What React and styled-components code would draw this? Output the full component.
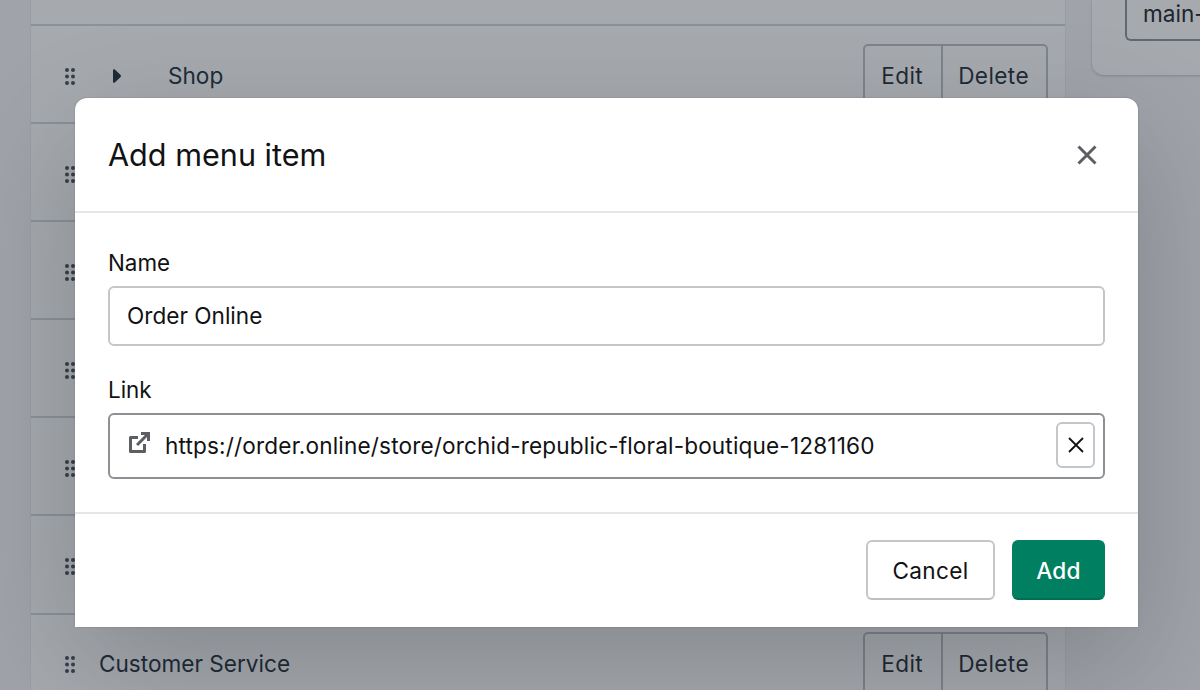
import React from "react";
import styled, { createGlobalStyle } from "styled-components";

const Global = createGlobalStyle`
  html, body { margin: 0; padding: 0; height: 100%; overflow: hidden; background: #f6f6f7; }
  body { font-family: Inter, "Liberation Sans", sans-serif; color: #111213; -webkit-font-smoothing: antialiased; }
`;

const Page = styled.div`
  width: 1200px;
  height: 690px;
  overflow: hidden;
  position: relative;
  display: flex;
  align-items: flex-start;
  gap: 26px;
  padding-left: 30px;
  box-sizing: border-box;
`;

const MenuCard = styled.div`
  width: 1036px;
  flex: none;
  background: #fff;
  border-left: 1px solid #e9ebee;
  border-right: 1px solid #e9ebee;
  box-sizing: border-box;
`;

const Row = styled.div`
  height: ${(p) => (p.$short ? "26px" : "98.1px")};
  box-sizing: border-box;
  border-bottom: 2px solid #d2d6da;
  display: flex;
  align-items: center;
  padding: ${(p) => (p.$short ? "0" : "4px 17px 0 34px")};
`;

const Handle = styled.svg`
  width: 10px;
  height: 17px;
  flex: none;
  fill: #454f5b;
`;

const Caret = styled.svg`
  width: 8px;
  height: 14px;
  margin-left: 38px;
  flex: none;
  fill: #1c2b3a;
`;

const RowLabel = styled.span`
  font-size: 22.6px;
  color: #202e3b;
  margin: 0 0 2px ${(p) => p.$ml}px;
  flex: 1;
`;

const ButtonGroup = styled.div`
  display: flex;
  height: 65px;
  border: 2px solid #bcc0c4;
  border-radius: 5px;
  box-sizing: border-box;
  background: #fff;
`;

const GroupButton = styled.div`
  font-size: 22.6px;
  letter-spacing: 0.4px;
  color: #212b36;
  padding: ${(p) => (p.$first ? "0 18px 2px 16px" : "0 17px 2px 15px")};
  display: flex;
  align-items: center;
  & + & { border-left: 2px solid #bcc0c4; }
`;

const SideCard = styled.div`
  flex: 1;
  height: 75px;
  background: #fff;
  border-radius: 0 0 0 12px;
  padding-left: 33px;
  box-shadow: 0 1px 3px rgba(33, 43, 54, 0.25);
`;

const SideInput = styled.div`
  height: 41px;
  box-sizing: border-box;
  border: 2px solid #8c9196;
  border-top: none;
  border-right: none;
  border-radius: 0 0 0 6px;
  padding: 0 0 0 16px;
  font-size: 22.6px;
  line-height: 28px;
  color: #202223;
  white-space: nowrap;
  overflow: hidden;
`;

const Backdrop = styled.div`
  position: absolute;
  inset: 0;
  background: rgba(33, 43, 54, 0.4);
`;

const Dialog = styled.div`
  position: absolute;
  left: 75px;
  top: 98px;
  width: 1063px;
  height: 529px;
  background: #fff;
  border-radius: 12px 12px 0 0;
  box-shadow: 0 39px 120px rgba(0, 0, 0, 0.2), 0 0 2px rgba(0, 0, 0, 0.2);
  display: flex;
  flex-direction: column;
`;

const Header = styled.header`
  height: 115px;
  box-sizing: border-box;
  border-bottom: 2px solid #e4e5e7;
  display: flex;
  align-items: center;
  justify-content: space-between;
  padding: 0 39px 0 33px;
`;

const Title = styled.h2`
  margin: 0;
  font-size: 30.6px;
  font-weight: 400;
  color: #111213;
`;

const CloseIcon = styled.svg`
  width: 24px;
  height: 24px;
  stroke: #5c5f62;
  stroke-width: 3;
  fill: none;
  display: block;
`;

const Body = styled.div`
  flex: 1;
  box-sizing: border-box;
  border-bottom: 2px solid #e4e5e7;
  padding: 35px 33px 0;
`;

const Field = styled.div`
  margin-bottom: ${(p) => p.$mb || 0}px;
`;

const Label = styled.div`
  font-size: 22.4px;
  line-height: 30px;
  color: #111213;
  margin-bottom: 8px;
`;

const TextBox = styled.div`
  height: ${(p) => (p.$link ? 66 : 60)}px;
  box-sizing: border-box;
  border: 2px solid ${(p) => (p.$link ? "#8c9196" : "#c4c7ca")};
  border-radius: 6px;
  display: flex;
  align-items: center;
  padding: ${(p) => (p.$link ? "0 8px 2px 17px" : "0 17px 2px")};
  font-size: 22.6px;
  letter-spacing: ${(p) => (p.$link ? 0.15 : 0)}px;
  color: #111213;
`;

const LinkIcon = styled.svg`
  width: 24px;
  height: 24px;
  fill: #5c5f62;
  flex: none;
  margin: 0 14px 5px 0;
`;

const LinkText = styled.span`
  flex: 1;
  white-space: nowrap;
`;

const ClearButton = styled.div`
  width: 39px;
  height: 46px;
  box-sizing: border-box;
  border: 2px solid #c4c7ca;
  border-radius: 6px;
  display: flex;
  align-items: center;
  justify-content: center;
`;

const ClearIcon = styled.svg`
  width: 18px;
  height: 18px;
  stroke: #111213;
  stroke-width: 1.8;
  fill: none;
`;

const Footer = styled.footer`
  height: 113px;
  box-sizing: border-box;
  display: flex;
  justify-content: flex-end;
  align-items: flex-start;
  gap: 17px;
  padding: 26px 33px 0;
`;

const Button = styled.div`
  height: 60px;
  box-sizing: border-box;
  border-radius: 6px;
  display: flex;
  align-items: center;
  justify-content: center;
  font-size: 22.6px;
  letter-spacing: 0.3px;
  font-weight: ${(p) => (p.$primary ? 500 : 400)};
  width: ${(p) => (p.$primary ? 93 : 129)}px;
  color: ${(p) => (p.$primary ? "#fff" : "#111213")};
  background: ${(p) => (p.$primary ? "#008060" : "#fff")};
  border: 2px solid ${(p) => (p.$primary ? "#008060" : "#c4c7ca")};
  border-bottom-color: ${(p) => (p.$primary ? "#006e52" : "#babfc3")};
`;

const Dots = () => (
  <Handle viewBox="0 0 10 17">
    {[2, 8.5, 15].map((y) =>
      [2, 8].map((x) => <circle key={`${x}-${y}`} cx={x} cy={y} r="2" />)
    )}
  </Handle>
);

const rows = [
  { label: "Shop", caret: true, actions: true },
  {},
  {},
  {},
  {},
  {},
  { label: "Customer Service", ml: 24, actions: true },
];

export default function App() {
  return (
    <Page>
      <Global />
      <MenuCard>
        <Row $short />
        {rows.map((r, i) => (
          <Row key={i}>
            <Dots />
            {r.caret && (
              <Caret viewBox="0 0 8 14">
                <path d="M0 1.300c0-1 1.100-1.500 1.800-.8l5.800 5.600c.5.500.5 1.300 0 1.800l-5.800 5.600c-.7.700-1.800.2-1.800-.8z" />
              </Caret>
            )}
            {r.label && <RowLabel $ml={r.caret ? 47 : r.ml}>{r.label}</RowLabel>}
            {r.actions && (
              <ButtonGroup>
                <GroupButton $first>Edit</GroupButton>
                <GroupButton>Delete</GroupButton>
              </ButtonGroup>
            )}
          </Row>
        ))}
      </MenuCard>
      <SideCard>
        <SideInput>main-</SideInput>
      </SideCard>
      <Backdrop />
      <Dialog role="dialog">
        <Header>
          <Title>Add menu item</Title>
          <CloseIcon viewBox="0 0 24 24">
            <path d="M3.500 3.500l17 17M20.500 3.500l-17 17" />
          </CloseIcon>
        </Header>
        <Body>
          <Field $mb={29}>
            <Label>Name</Label>
            <TextBox>Order Online</TextBox>
          </Field>
          <Field>
            <Label>Link</Label>
            <TextBox $link>
              <LinkIcon viewBox="0 0 24 24">
                <path d="M2 6.500A1.500 1.500 0 0 1 3.500 5H11v3H5v11h11v-6h3v7.500A1.500 1.500 0 0 1 17.500 22h-14A1.500 1.500 0 0 1 2 20.500z" />
                <path d="M14 1h9v9h-3V6.100l-8.900 8.900-2.100-2.100L17.900 4H14z" />
              </LinkIcon>
              <LinkText>https://order.online/store/orchid-republic-floral-boutique-1281160</LinkText>
              <ClearButton>
                <ClearIcon viewBox="0 0 18 18">
                  <path d="M2 2l14 14M16 2L2 16" />
                </ClearIcon>
              </ClearButton>
            </TextBox>
          </Field>
        </Body>
        <Footer>
          <Button>Cancel</Button>
          <Button $primary>Add</Button>
        </Footer>
      </Dialog>
    </Page>
  );
}
